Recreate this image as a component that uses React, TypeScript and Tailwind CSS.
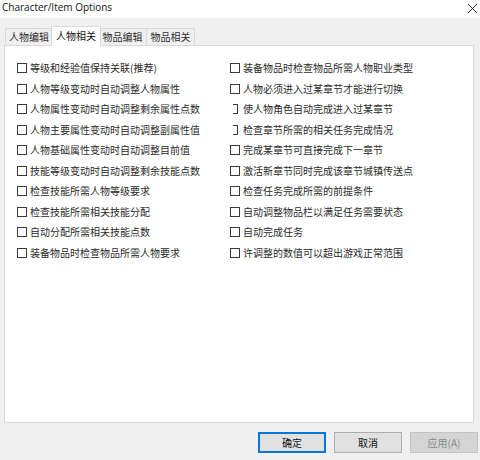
import React from "react";

const left = [
  "等级和经验值保持关联(推荐)",
  "人物等级变动时自动调整人物属性",
  "人物属性变动时自动调整剩余属性点数",
  "人物主要属性变动时自动调整副属性值",
  "人物基础属性变动时自动调整目前值",
  "技能等级变动时自动调整剩余技能点数",
  "检查技能所需人物等级要求",
  "检查技能所需相关技能分配",
  "自动分配所需相关技能点数",
  "装备物品时检查物品所需人物要求",
];

const right: { t: string; partial?: boolean }[] = [
  { t: "装备物品时检查物品所需人物职业类型" },
  { t: "人物必须进入过某章节才能进行切换" },
  { t: "使人物角色自动完成进入过某章节", partial: true },
  { t: "检查章节所需的相关任务完成情况", partial: true },
  { t: "完成某章节可直接完成下一章节" },
  { t: "激活新章节同时完成该章节城镇传送点" },
  { t: "检查任务完成所需的前提条件" },
  { t: "自动调整物品栏以满足任务需要状态" },
  { t: "自动完成任务" },
  { t: "许调整的数值可以超出游戏正常范围" },
];

function Row({ text, partial }: { text: string; partial?: boolean }) {
  return (
    <div className="h-[20.5px] flex items-center whitespace-nowrap">
      {partial ? (
        <span className="ml-[3px] mr-[5px] w-[5px] h-[10px] border-t border-r border-b border-[#3a3a3a] bg-white shrink-0" />
      ) : (
        <span className="mr-[3px] w-[10px] h-[10px] border border-[#3a3a3a] bg-white shrink-0" />
      )}
      <span className="leading-none">{text}</span>
    </div>
  );
}

const tabs = ["人物编辑", "人物相关", "物品编辑", "物品相关"];

export default function App() {
  return (
    <div
      className="w-[480px] h-[460px] bg-[#f0f0f0] overflow-hidden text-[#2b2b2b]"
      style={{ fontFamily: '"Noto Sans CJK SC", "Noto Sans", sans-serif' }}
    >
      {/* Title bar */}
      <div className="h-[18px] bg-white flex items-start justify-between">
        <span
          className="pl-[2px] text-[10px] leading-[14px] text-[#111]"
          style={{ fontFamily: '"Open Sans", "Noto Sans", sans-serif' }}
        >
          Character/Item Options
        </span>
        <svg width="11" height="11" viewBox="0 0 11 11" className="mt-[3px] mr-[2px]">
          <path d="M1 1 L10 10 M10 1 L1 10" stroke="#333" strokeWidth="1" fill="none" />
        </svg>
      </div>

      {/* Tabs */}
      <div className="h-[27px] flex items-end pl-[5px]">
        {tabs.map((t, i) =>
          i === 1 ? (
            <div
              key={t}
              className="relative z-10 -mb-px -mx-[2px] w-[50px] h-[20px] bg-white border border-b-0 border-[#d9d9d9] flex items-center justify-center text-[10px] leading-none text-[#111]"
            >
              <span className="-mt-[1px]">{t}</span>
            </div>
          ) : (
            <div
              key={t}
              className={
                "w-[48px] h-[17px] bg-[#f0f0f0] border border-b-0 border-[#d9d9d9] flex items-center justify-center text-[10px] leading-none " +
                (i === 0 ? "" : "border-l-0")
              }
            >
              {t}
            </div>
          )
        )}
      </div>

      {/* Panel */}
      <div className="ml-[4px] w-[470px] h-[378px] bg-white border border-[#d9d9d9] pt-[12px] pl-[12px] text-[10px]">
        <div className="grid grid-cols-[213px_1fr]">
          <div className="flex flex-col">
            {left.map((t) => (
              <Row key={t} text={t} />
            ))}
          </div>
          <div className="flex flex-col">
            {right.map((r) => (
              <Row key={r.t} text={r.t} partial={r.partial} />
            ))}
          </div>
        </div>
      </div>

      {/* Buttons */}
      <div className="mt-[9px] flex justify-end gap-[8px] pr-[2px] text-[10px]">
        <button className="w-[68px] h-[21px] bg-[#e1e1e1] border border-[#0078d7] outline outline-1 outline-[#0078d7] -outline-offset-2 flex items-center justify-center leading-none text-[#111]">
          确定
        </button>
        <button className="w-[68px] h-[21px] bg-[#e1e1e1] border border-[#adadad] flex items-center justify-center leading-none text-[#111]">
          取消
        </button>
        <button className="w-[68px] h-[21px] bg-[#d4d4d4] border border-[#c4c4c4] text-[#8a8a8a] flex items-center justify-center leading-none">
          应用(A)
        </button>
      </div>
    </div>
  );
}
